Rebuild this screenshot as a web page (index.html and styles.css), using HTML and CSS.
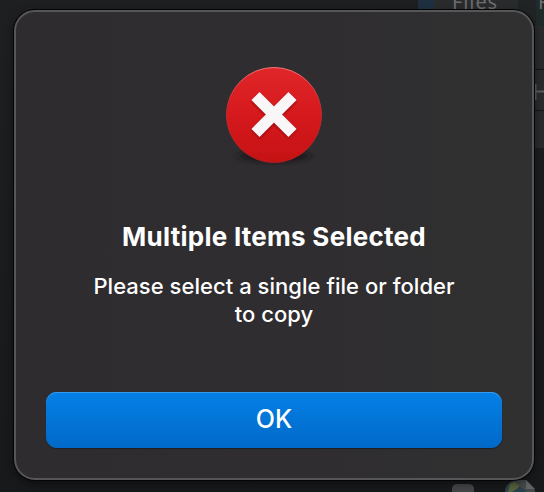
FILE: index.html
```html
<!DOCTYPE html>
<html lang="en">
<head>
<meta charset="utf-8">
<title>Multiple Items Selected</title>
<link rel="stylesheet" href="styles.css">
</head>
<body>
<div class="backdrop" aria-hidden="true">
  <svg width="544" height="492" viewBox="0 0 544 492">
    <path fill="#1e3040" d="M418 0h16v10h-16z"/>
    <path fill="#2a2b2d" d="M434 0h84v10h-84z"/>
    <path fill="#212425" d="M518 0h26v26h-26z"/>
    <path fill="#1f2b2a" d="M536 0h8v26h-8z"/>
    <path fill="#292b2c" d="M530 26h14v122h-14z"/>
    <path stroke="#151617" d="M530 69.500h14M530 110.500h14"/>
    <path stroke="#5b5d5e" stroke-width="2" d="M534 91.500h10M535.500 84v16"/>
    <text class="tab" x="452" y="9">Files</text>
    <text class="tab" x="538" y="9">F</text>
    <rect x="452" y="484" width="22" height="14" rx="5" fill="#444547"/>
    <circle cx="517" cy="492" r="12" fill="#29414b"/>
    <path fill="#58613a" d="M510 484l6-3 5 3-3 4-6 4-4 0z"/>
    <path fill="#45494a" d="M512 480h14l9 10v2h-8z"/>
    <path fill="#606465" d="M526 480v9h9z"/>
  </svg>
</div>
<main class="dialog" role="alertdialog" aria-labelledby="title">
  <svg class="icon" width="108" height="108" viewBox="0 0 108 108">
    <defs>
      <linearGradient id="red" x1="0" y1="0" x2="0" y2="1">
        <stop offset="0" stop-color="#e12629"/>
        <stop offset=".5" stop-color="#d5191d"/>
        <stop offset="1" stop-color="#c61214"/>
      </linearGradient>
      <linearGradient id="rim" x1="0" y1="0" x2="0" y2="1">
        <stop offset="0" stop-color="#f2777a"/>
        <stop offset=".35" stop-color="#c53034"/>
        <stop offset="1" stop-color="#a81d1f"/>
      </linearGradient>
      <filter id="soft" x="-20%" y="-100%" width="140%" height="300%"><feGaussianBlur stdDeviation="4 2"/></filter>
      <filter id="glow" x="-20%" y="-20%" width="140%" height="140%"><feGaussianBlur stdDeviation="1"/></filter>
    </defs>
    <ellipse cx="54" cy="95" rx="35" ry="6" fill="#1b191a" filter="url(#soft)"/>
    <circle cx="54" cy="54" r="47.500" fill="url(#red)" stroke="url(#rim)"/>
    <path d="M35.500 36.500L72.500 73.500M72.500 36.500L35.500 73.500" stroke="#9e1012" stroke-width="12" filter="url(#glow)"/>
    <path d="M35.500 35L72.500 72M72.500 35L35.500 72" stroke="#f8f6f6" stroke-width="11.500"/>
  </svg>
  <h1 class="title" id="title">Multiple Items Selected</h1>
  <p class="message">Please select a single file or folder<br>to copy</p>
  <button class="ok">OK</button>
</main>
</body>
</html>
```
FILE: styles.css
```css
* { box-sizing: border-box; }
body {
  margin: 0;
  width: 544px;
  height: 492px;
  padding: 10px 10px 12px 14px;
  overflow: hidden;
  background: linear-gradient(180deg, #1d1f21, #18191b);
  font-family: Inter, "Liberation Sans", sans-serif;
}
.backdrop { position: absolute; inset: 0; z-index: -1; }
.backdrop svg { display: block; }
.tab { font: 20px "Noto Sans", sans-serif; fill: #6c6e70; letter-spacing: .9px; }
.dialog {
  display: flex;
  flex-direction: column;
  align-items: center;
  width: 520px;
  height: 470px;
  padding: 49px 30px 30px;
  border: 2px solid #565557;
  border-radius: 21px;
  background: linear-gradient(90deg, #2f2c2f, #2f2d2f 60%, #303031);
  box-shadow: 0 0 0 1px #050505, 0 3px 10px rgba(0, 0, 0, .5);
  color: #fff;
}
.icon { display: block; flex: none; }
.title {
  margin: 52px 0 0;
  font-size: 26px;
  line-height: 32px;
  font-weight: 700;
  letter-spacing: .26px;
  white-space: nowrap;
}
.message {
  margin: 19px 0 0;
  font-size: 22px;
  line-height: 28px;
  font-weight: 450;
  text-align: center;
  white-space: nowrap;
  letter-spacing: .04px;
}
.ok {
  width: 456px;
  height: 56px;
  margin-top: auto;
  padding: 0 0 2px;
  border: 0;
  border-radius: 11px;
  background: linear-gradient(180deg, #0580e6, #0069c8);
  box-shadow: inset 0 1px #359bed, 0 1px 1px #1d2026;
  color: #fff;
  font: 500 25px Inter, "Liberation Sans", sans-serif;
}
```
